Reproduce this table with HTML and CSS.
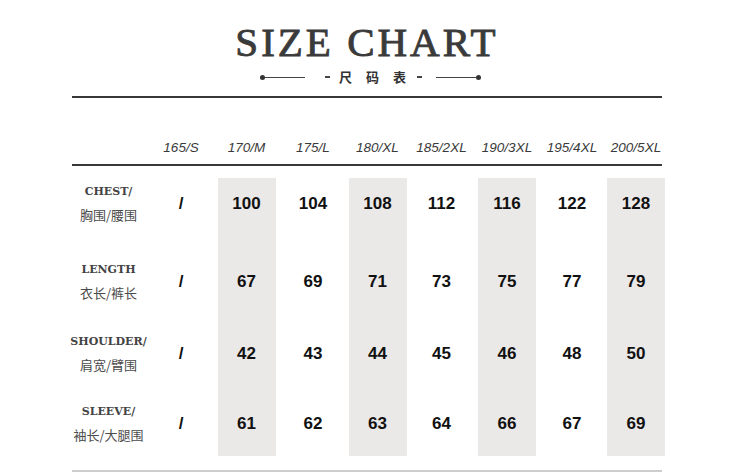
FILE: index.html
```html
<!DOCTYPE html>
<html lang="zh">
<head>
<meta charset="utf-8">
<title>Size Chart</title>
<link rel="stylesheet" href="styles.css">
</head>
<body>
<div class="sheet">
  <header class="head">
    <h1 class="title">SIZE CHART</h1>
    <div class="sub">
      <span class="dot"></span><span class="line line-l"></span>
      <span class="dash dash-l"></span>
      <span class="cn">尺</span><span class="cn">码</span><span class="cn">表</span>
      <span class="dash dash-r"></span>
      <span class="line line-r"></span><span class="dot"></span>
    </div>
  </header>
  <div class="rule rule-dark rule-top"></div>
  <div class="grid sizes">
    <span></span>
    <span>165/S</span><span>170/M</span><span>175/L</span><span>180/XL</span>
    <span>185/2XL</span><span>190/3XL</span><span>195/4XL</span><span>200/5XL</span>
  </div>
  <div class="rule rule-dark rule-mid"></div>
  <div class="grid table">
    <div class="shade s3"></div>
    <div class="shade s5"></div>
    <div class="shade s7"></div>
    <div class="shade s9"></div>
    <div class="row r1">
      <div class="label"><span class="en">CHEST/</span><span class="zh">胸围/腰围</span></div>
      <div class="val">/</div><div class="val">100</div><div class="val">104</div><div class="val">108</div>
      <div class="val">112</div><div class="val">116</div><div class="val">122</div><div class="val">128</div>
    </div>
    <div class="row r2">
      <div class="label"><span class="en">LENGTH</span><span class="zh">衣长/裤长</span></div>
      <div class="val">/</div><div class="val">67</div><div class="val">69</div><div class="val">71</div>
      <div class="val">73</div><div class="val">75</div><div class="val">77</div><div class="val">79</div>
    </div>
    <div class="row r3">
      <div class="label"><span class="en">SHOULDER/</span><span class="zh">肩宽/臂围</span></div>
      <div class="val">/</div><div class="val">42</div><div class="val">43</div><div class="val">44</div>
      <div class="val">45</div><div class="val">46</div><div class="val">48</div><div class="val">50</div>
    </div>
    <div class="row r4">
      <div class="label"><span class="en">SLEEVE/</span><span class="zh">袖长/大腿围</span></div>
      <div class="val">/</div><div class="val">61</div><div class="val">62</div><div class="val">63</div>
      <div class="val">64</div><div class="val">66</div><div class="val">67</div><div class="val">69</div>
    </div>
  </div>
  <div class="rule rule-light rule-bottom"></div>
</div>
</body>
</html>
```
FILE: styles.css
```css
html, body {
  margin: 0;
  padding: 0;
  background: #ffffff;
}
body {
  font-family: "Liberation Sans", Arial, sans-serif;
  color: #222;
}
.sheet {
  width: 596px;
  margin-left: 72px;
  padding-top: 22px;
}
.head {
  width: 590px;
}
.title {
  margin: 0;
  font-family: "Liberation Serif", "Times New Roman", serif;
  font-weight: normal;
  font-size: 41px;
  line-height: 41px;
  letter-spacing: 3px;
  text-align: center;
  color: #3a3a3a;
  -webkit-text-stroke: 0.9px #3a3a3a;
}
.sub {
  margin-top: 7px;
  height: 14px;
  display: flex;
  align-items: center;
  justify-content: center;
  padding-left: 7px;
}
.dot {
  width: 5px;
  height: 5px;
  border-radius: 50%;
  background: #333;
  flex: none;
}
.line {
  width: 40px;
  height: 1px;
  background: #444;
  flex: none;
}
.line-l { margin-right: 20px; }
.line-r { margin-left: 14px; }
.dash {
  width: 5px;
  height: 2px;
  background: #444;
  flex: none;
}
.dash-l { margin-right: 9px; }
.dash-r { margin-left: 11px; }
.cn {
  font-family: "Noto Sans CJK SC", sans-serif;
  font-weight: bold;
  font-size: 13px;
  line-height: 14px;
  width: 13px;
  color: #333;
}
.cn + .cn { margin-left: 14px; }
.rule {
  width: 590px;
  height: 2px;
}
.rule-dark { background: #383838; }
.rule-light { background: #cdcdcd; }
.rule-top { margin-top: 12px; }
.rule-mid { margin-top: 6px; }
.rule-bottom { margin-top: 14px; }
.grid {
  display: grid;
  grid-template-columns: 77px 64px 67px 66px 63px 65px 66px 64px 64px;
}
.sizes {
  margin-top: 40px;
  height: 20px;
}
.sizes span {
  font-style: italic;
  font-size: 13.5px;
  line-height: 20px;
  text-align: center;
  color: #3a3a3a;
  white-space: nowrap;
}
.table {
  margin-top: 12px;
  grid-template-rows: 51px 27px 51px 21px 51px 19px 51px 7px;
}
.shade {
  grid-row: 1 / -1;
  justify-self: center;
  width: 58px;
  background: #ebe8e8;
}
.s3 { grid-column: 3; }
.s5 { grid-column: 5; }
.s7 { grid-column: 7; }
.s9 { grid-column: 9; }
.row { display: contents; }
.r1 > * { grid-row: 1; }
.r2 > * { grid-row: 3; }
.r3 > * { grid-row: 5; }
.r4 > * { grid-row: 7; }
.row > :nth-child(1) { grid-column: 1; }
.row > :nth-child(2) { grid-column: 2; }
.row > :nth-child(3) { grid-column: 3; }
.row > :nth-child(4) { grid-column: 4; }
.row > :nth-child(5) { grid-column: 5; }
.row > :nth-child(6) { grid-column: 6; }
.row > :nth-child(7) { grid-column: 7; }
.row > :nth-child(8) { grid-column: 8; }
.row > :nth-child(9) { grid-column: 9; }
.label {
  display: flex;
  flex-direction: column;
  align-items: center;
  justify-content: center;
  gap: 7px;
  padding-right: 4px;
  white-space: nowrap;
}
.en {
  font-family: "DejaVu Serif", "Liberation Serif", serif;
  font-weight: bold;
  font-size: 11px;
  line-height: 16px;
  color: #444;
}
.zh {
  font-family: "Noto Sans CJK SC", sans-serif;
  font-size: 13px;
  line-height: 16px;
  color: #4a4a4a;
}
.val {
  display: flex;
  align-items: center;
  justify-content: center;
  font-weight: bold;
  font-size: 17px;
  color: #111;
}
```
